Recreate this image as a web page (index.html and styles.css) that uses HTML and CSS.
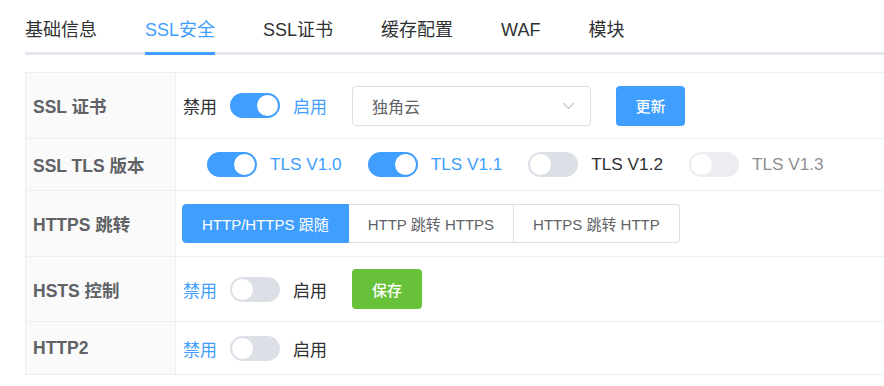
FILE: index.html
```html
<!DOCTYPE html>
<html lang="zh">
<head>
    <meta charset="UTF-8">
    <meta name="viewport" content="width=device-width, initial-scale=1.0">
    <title>SSL安全</title>
    <link rel="stylesheet" href="styles.css">
</head>
<body>

    <!-- Tabs -->
    <div class="tabs">
        <div class="tab">基础信息</div>
        <div class="tab active">SSL安全</div>
        <div class="tab">SSL证书</div>
        <div class="tab">缓存配置</div>
        <div class="tab">WAF</div>
        <div class="tab">模块</div>
    </div>

    <!-- Settings table -->
    <div class="form-table">
        <div class="row row-lg">
            <div class="label">SSL 证书</div>
            <div class="value">
                <span class="opt">禁用</span>
                <span class="switch on"></span>
                <span class="opt active">启用</span>
                <div class="select">
                    <span>独角云</span>
                    <svg width="13" height="8" viewBox="0 0 13 8"><path d="M1 1l5.5 5.5L12 1" fill="none" stroke="#c0c4cc" stroke-width="1.2"/></svg>
                </div>
                <button class="btn btn-blue">更新</button>
            </div>
        </div>

        <div class="row row-sm">
            <div class="label">SSL TLS 版本</div>
            <div class="value tls-list">
                <div class="tls"><span class="switch on"></span><span class="tls-name active">TLS V1.0</span></div>
                <div class="tls"><span class="switch on"></span><span class="tls-name active">TLS V1.1</span></div>
                <div class="tls"><span class="switch"></span><span class="tls-name">TLS V1.2</span></div>
                <div class="tls disabled"><span class="switch"></span><span class="tls-name">TLS V1.3</span></div>
            </div>
        </div>

        <div class="row row-lg">
            <div class="label">HTTPS 跳转</div>
            <div class="value">
                <div class="radio-group">
                    <span class="radio checked">HTTP/HTTPS 跟随</span>
                    <span class="radio">HTTP 跳转 HTTPS</span>
                    <span class="radio">HTTPS 跳转 HTTP</span>
                </div>
            </div>
        </div>

        <div class="row row-md">
            <div class="label">HSTS 控制</div>
            <div class="value">
                <span class="opt active">禁用</span>
                <span class="switch"></span>
                <span class="opt">启用</span>
                <button class="btn btn-green">保存</button>
            </div>
        </div>

        <div class="row row-last">
            <div class="label">HTTP2</div>
            <div class="value">
                <span class="opt active">禁用</span>
                <span class="switch"></span>
                <span class="opt">启用</span>
            </div>
        </div>
    </div>

</body>
</html>
```

FILE: styles.css
```css
html {
    overflow: hidden;
}

body {
    margin: 0;
    background: #fff;
    color: #303133;
    font-family: "Liberation Sans", "Noto Sans CJK SC", sans-serif;
}

/* Tabs */
.tabs {
    display: flex;
    margin-left: 25px;
    border-bottom: 3px solid #e4e7ed;
}

.tab {
    font-size: 18px;
    line-height: 20px;
    padding: 20px 0 12px;
    margin-right: 48px;
    margin-bottom: -3px;
    border-bottom: 3px solid transparent;
    color: #303133;
}

.tab.active {
    color: #409eff;
    border-bottom-color: #409eff;
}

/* Table */
.form-table {
    margin: 17px 0 0 25px;
    width: 900px;
    border-top: 1px solid #ebeef5;
    border-left: 1px solid #ebeef5;
}

.row {
    display: flex;
    box-sizing: border-box;
    border-bottom: 1px solid #ebeef5;
}

.row-lg { height: 66px; }
.row-md { height: 65px; }
.row-sm { height: 52px; }
.row-last { height: 53px; }

.label {
    width: 142px;
    flex-shrink: 0;
    padding-left: 7px;
    display: flex;
    align-items: center;
    background: #fafafa;
    border-right: 1px solid #ebeef5;
    color: #606266;
    font-size: 17.5px;
    font-weight: bold;
}

.value {
    flex: 1;
    display: flex;
    align-items: center;
    padding-left: 6px;
    font-size: 17px;
}

.opt {
    color: #303133;
    margin-left: 1px;
}

.opt.active {
    color: #409eff;
}

/* Switch */
.switch {
    position: relative;
    display: inline-block;
    width: 50px;
    height: 25px;
    border-radius: 13px;
    background: #dcdfe6;
    margin: 0 12px 0 13px;
    flex-shrink: 0;
}

.switch::after {
    content: "";
    position: absolute;
    top: 2px;
    left: 2px;
    width: 21px;
    height: 21px;
    border-radius: 50%;
    background: #fff;
}

.switch.on {
    background: #409eff;
}

.switch.on::after {
    left: 27px;
}

/* Select */
.select {
    box-sizing: border-box;
    width: 239px;
    height: 40px;
    margin-left: 25px;
    padding: 0 15px 0 19px;
    display: flex;
    align-items: center;
    justify-content: space-between;
    border: 1px solid #dcdfe6;
    border-radius: 4px;
    color: #606266;
    font-size: 16px;
}

/* Buttons */
.btn {
    height: 40px;
    border: none;
    border-radius: 4px;
    color: #fff;
    font-family: "Liberation Sans", "Noto Sans CJK SC", sans-serif;
    font-size: 15px;
    font-weight: 500;
}

.btn-blue {
    width: 69px;
    margin-left: 25px;
    background: #409eff;
}

.btn-green {
    width: 70px;
    margin-left: 25px;
    background: #67c23a;
}

/* TLS list */
.tls-list {
    padding-left: 31px;
}

.tls {
    display: flex;
    align-items: center;
    margin-right: 26px;
}

.tls .switch {
    margin: 0 13px 0 0;
}

.tls-name {
    color: #303133;
    font-size: 17.2px;
}

.tls-name.active {
    color: #409eff;
}

.tls.disabled {
    opacity: .55;
}

/* Radio buttons */
.radio-group {
    display: flex;
    height: 39px;
}

.radio {
    box-sizing: border-box;
    display: flex;
    align-items: center;
    padding: 0 19px;
    border: 1px solid #dcdfe6;
    border-left: none;
    font-size: 15px;
    color: #606266;
    background: #fff;
}

.radio:first-child {
    border-left: 1px solid #dcdfe6;
    border-radius: 4px 0 0 4px;
}

.radio:last-child {
    border-radius: 0 4px 4px 0;
}

.radio.checked {
    background: #409eff;
    border-color: #409eff;
    color: #fff;
}
```
